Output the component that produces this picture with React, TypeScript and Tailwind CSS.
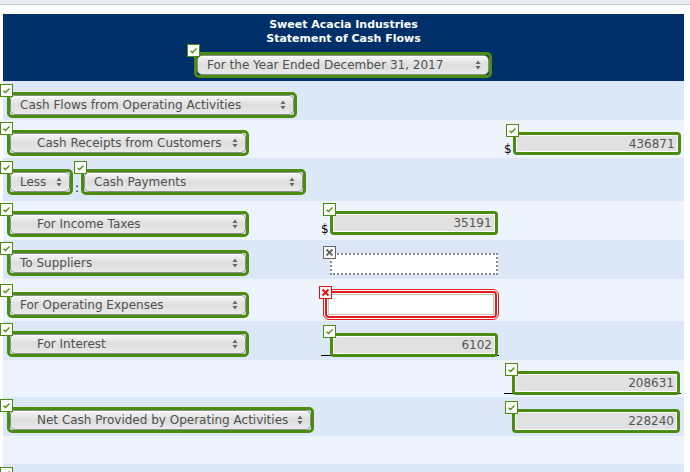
import React from 'react'

const GREEN = 'border-[#4a8c0f]'

function Mark({ kind = 'ok' }: { kind?: 'ok' | 'empty' | 'bad' }) {
  if (kind === 'empty') {
    return (
      <div className="absolute -left-[9px] -top-[9px] z-10 flex h-[13px] w-[13px] items-center justify-center border border-[#666] bg-white">
        <svg width="9" height="9" viewBox="0 0 9 9">
          <path d="M1.5 1.5 L7.5 7.5 M7.5 1.5 L1.5 7.5" stroke="#666" strokeWidth="1.8" />
        </svg>
      </div>
    )
  }
  if (kind === 'bad') {
    return (
      <div className="absolute -left-[5px] -top-[4px] z-10 flex h-[13px] w-[13px] items-center justify-center border border-[#e01010] bg-white">
        <svg width="9" height="9" viewBox="0 0 9 9">
          <path d="M1.5 1.5 L7.5 7.5 M7.5 1.5 L1.5 7.5" stroke="#e01010" strokeWidth="2" />
        </svg>
      </div>
    )
  }
  return (
    <div className="absolute -left-[10px] -top-[11px] z-10 flex h-[13px] w-[13px] items-center justify-center border border-[#4a8c0f] bg-white">
      <svg width="9" height="7" viewBox="0 0 9 7">
        <path d="M1.5 3.8 L3.5 5.5 L7.5 1.5" stroke="#4a8c0f" strokeWidth="1.3" fill="none" />
      </svg>
    </div>
  )
}

function Arrows() {
  return (
    <svg width="6" height="10" viewBox="0 0 6 10" className="shrink-0">
      <path d="M0.5 4 L3 0.5 L5.5 4 Z M0.5 6 L3 9.5 L5.5 6 Z" fill="#666" />
    </svg>
  )
}

function Select({ label, w, indent = false }: { label: string; w: number; indent?: boolean }) {
  return (
    <div className={`relative h-[26px] rounded-[5px] border-[3px] ${GREEN}`} style={{ width: w }}>
      <Mark />
      <div className="flex h-full items-center justify-between rounded-[5px] border border-[#8c8c8c] bg-gradient-to-b from-[#f6f6f6] via-[#dedede] to-[#e9e9e9] pr-[7px] shadow-[inset_0_1px_0_#fff]">
        <span className={`whitespace-pre text-[12px] leading-none text-[#505050] ${indent ? 'pl-[26px]' : 'pl-[9px]'}`}>
          {label}
        </span>
        <Arrows />
      </div>
    </div>
  )
}

function NumBox({ value, h = 24 }: { value: string; h?: number }) {
  return (
    <div className={`relative w-[168px] rounded-[4px] border-[3px] ${GREEN}`} style={{ height: h }}>
      <Mark />
      <div className="flex h-full items-center justify-end border border-white bg-[#e1e1e1] pr-[2px] text-[12px] leading-none text-[#555]">
        {value}
      </div>
    </div>
  )
}

const DARK = 'bg-[#dce8f8]'
const LIGHT = 'bg-[#edf4fe]'

function Row({ bg, h, children }: { bg: string; h: number; children?: React.ReactNode }) {
  return (
    <div className={`grid grid-cols-[313px_185px_183px] ${bg}`} style={{ height: h }}>
      {children}
    </div>
  )
}

export default function App() {
  return (
    <div className="h-[472px] overflow-hidden bg-white font-['DejaVu_Sans',sans-serif]">
      <div className="h-[5px] border-b border-[#c9ced6] bg-[#e9edf3]" />
      <div className="ml-[3px] mt-[9px] w-[681px]">
        <div className="h-[67px] bg-[#00306a] pt-[4px]">
          <div className="text-center text-[11px] font-bold leading-[14px] text-white">
            <div>Sweet Acacia Industries</div>
            <div>Statement of Cash Flows</div>
          </div>
          <div className="ml-[191px] mt-[6px]">
            <Select label="For the Year Ended December 31, 2017" w={298} />
          </div>
        </div>

        <Row bg={DARK} h={39}>
          <div className="pl-[4px] pt-[11px]">
            <Select label="Cash Flows from Operating Activities" w={290} />
          </div>
        </Row>

        <Row bg={LIGHT} h={38}>
          <div className="pl-[4px] pt-[10px]">
            <Select label="Cash Receipts from Customers" w={242} indent />
          </div>
          <div />
          <div className="flex items-end pb-[3px] pl-[3px]">
            <span className="text-[12px] leading-none text-black">$</span>
            <div className="ml-[1px]">
              <NumBox value="436871" h={23} />
            </div>
          </div>
        </Row>

        <Row bg={DARK} h={43}>
          <div className="flex items-start pl-[4px] pt-[11px]">
            <Select label="Less" w={66} />
            <span className="mt-[13px] px-[2px] text-[12px] leading-none text-black">:</span>
            <Select label="Cash Payments" w={225} />
          </div>
        </Row>

        <Row bg={LIGHT} h={39}>
          <div className="pl-[4px] pt-[10px]">
            <Select label="For Income Taxes" w={242} indent />
          </div>
          <div className="flex items-start pl-[5px] pt-[10px]">
            <span className="mt-[12px] text-[12px] leading-none text-black">$</span>
            <div className="ml-[1px]">
              <NumBox value="35191" />
            </div>
          </div>
        </Row>

        <Row bg={DARK} h={39}>
          <div className="pl-[4px] pt-[10px]">
            <Select label="To Suppliers" w={242} />
          </div>
          <div className="pl-[14px] pt-[13px]">
            <div className="relative h-[22px] w-[168px] border-2 border-dotted border-[#8a8a8a] bg-white">
              <Mark kind="empty" />
            </div>
          </div>
        </Row>

        <Row bg={LIGHT} h={42}>
          <div className="pl-[4px] pt-[13px]">
            <Select label="For Operating Expenses" w={242} />
          </div>
          <div className="pl-[7px] pt-[10px]">
            <div className="relative h-[31px] w-[176px] rounded-[6px] border border-[#e31c1c] bg-white p-[1px]">
              <Mark kind="bad" />
              <div className="h-full rounded-[4px] border-2 border-[#e31c1c] bg-white p-[1px]">
                <div className="h-full border border-[#c4c4c4] bg-white" />
              </div>
            </div>
          </div>
        </Row>

        <Row bg={DARK} h={39}>
          <div className="pl-[4px] pt-[10px]">
            <Select label="For Interest" w={242} indent />
          </div>
          <div className="pl-[5px] pt-[12px]">
            <div className="w-[178px] border-b border-black pl-[9px]">
              <div className="-mb-[2px]">
                <NumBox value="6102" h={24} />
              </div>
            </div>
          </div>
        </Row>

        <Row bg={LIGHT} h={37}>
          <div />
          <div />
          <div className="pl-[3px] pt-[11px]">
            <div className="w-[177px] border-b border-black pl-[8px]">
              <div className="-mb-[2px]">
                <NumBox value="208631" h={24} />
              </div>
            </div>
          </div>
        </Row>

        <Row bg={DARK} h={39}>
          <div className="pl-[4px] pt-[10px]">
            <Select label="Net Cash Provided by Operating Activities" w={307} indent />
          </div>
          <div />
          <div className="pl-[11px] pt-[12px]">
            <NumBox value="228240" h={24} />
          </div>
        </Row>

        <Row bg={LIGHT} h={28} />

        <Row bg={DARK} h={20}>
          <div className="pl-[7px] pt-[14px]">
            <div className="relative">
              <Mark />
            </div>
          </div>
        </Row>
      </div>
    </div>
  )
}
